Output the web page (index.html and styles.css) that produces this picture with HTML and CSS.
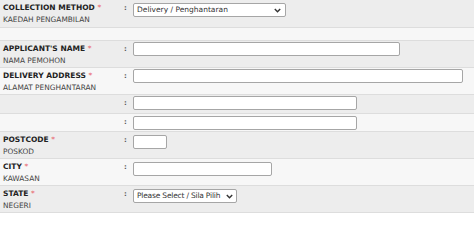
FILE: index.html
```html
<!DOCTYPE html>
<html>
<head>
<meta charset="utf-8">
<link rel="stylesheet" href="styles.css">
</head>
<body>
<div class="form">
  <div class="row dark h27">
    <div class="label"><b>COLLECTION METHOD <span class="req">*</span></b><span class="sub">KAEDAH PENGAMBILAN</span></div>
    <div class="colon">:</div>
    <div class="field f3"><div class="select w-method"><span>Delivery / Penghantaran</span><svg class="chev" width="7" height="5" viewBox="0 0 7 5"><path d="M0.8 1 L3.5 3.8 L6.2 1" fill="none" stroke="#333" stroke-width="1.4"/></svg></div></div>
  </div>
  <div class="row light h12"></div>
  <div class="row dark">
    <div class="label"><b>APPLICANT'S NAME <span class="req">*</span></b><span class="sub">NAMA PEMOHON</span></div>
    <div class="colon">:</div>
    <div class="field f1"><div class="input w-name"></div></div>
  </div>
  <div class="row light">
    <div class="label"><b>DELIVERY ADDRESS <span class="req">*</span></b><span class="sub">ALAMAT PENGHANTARAN</span></div>
    <div class="colon">:</div>
    <div class="field f1"><div class="input w-addr1"></div></div>
  </div>
  <div class="row dark h18">
    <div class="label"></div>
    <div class="colon">:</div>
    <div class="field f1"><div class="input w-addr"></div></div>
  </div>
  <div class="row light h17">
    <div class="label"></div>
    <div class="colon">:</div>
    <div class="field f2"><div class="input w-addr"></div></div>
  </div>
  <div class="row dark">
    <div class="label"><b>POSTCODE <span class="req">*</span></b><span class="sub">POSKOD</span></div>
    <div class="colon">:</div>
    <div class="field f3"><div class="input w-post"></div></div>
  </div>
  <div class="row light">
    <div class="label"><b>CITY <span class="req">*</span></b><span class="sub">KAWASAN</span></div>
    <div class="colon">:</div>
    <div class="field f3"><div class="input w-city"></div></div>
  </div>
  <div class="row dark">
    <div class="label"><b>STATE <span class="req">*</span></b><span class="sub">NEGERI</span></div>
    <div class="colon">:</div>
    <div class="field f3"><div class="select w-state"><span>Please Select / Sila Pilih</span><svg class="chev" width="7" height="5" viewBox="0 0 7 5"><path d="M0.8 1 L3.5 3.8 L6.2 1" fill="none" stroke="#333" stroke-width="1.4"/></svg></div></div>
  </div>
</div>
</body>
</html>
```
FILE: styles.css
```css
html, body {
  margin: 0;
  padding: 0;
  background: #ffffff;
}
body {
  font-family: "DejaVu Sans", Verdana, sans-serif;
  font-size: 7px;
  color: #222;
}
.form {
  width: 474px;
}
.row {
  display: grid;
  grid-template-columns: 124px 9px 1fr;
  height: 26px;
  border-bottom: 1px solid #dddddd;
}
.row.h27 { height: 27px; }
.row.h12 { height: 12px; }
.row.h18 { height: 18px; }
.row.h17 { height: 17px; }
.dark { background: #ededed; }
.light { background: #f7f7f7; }
.label {
  padding: 2px 0 0 3px;
  display: flex;
  flex-direction: column;
  line-height: 11.5px;
}
.label b {
  font-weight: bold;
  color: #222;
  font-size: 7.5px;
}
.req {
  color: #e8626a;
  font-weight: normal;
}
.sub {
  color: #444;
  font-size: 7.4px;
}
.colon {
  padding-top: 3px;
  font-weight: bold;
  color: #555;
  font-size: 7px;
  line-height: 11px;
}
.field { padding-top: 2px; }
.field.f1 { padding-top: 1px; }
.field.f2 { padding-top: 2px; }
.field.f3 { padding-top: 3px; }
.input {
  height: 12px;
  background: #fff;
  border: 1px solid #a6a6a6;
  border-radius: 2px;
  box-sizing: content-box;
}
.w-name { width: 265px; }
.w-addr1 { width: 328px; }
.w-addr { width: 222px; }
.w-post { width: 32px; }
.w-city { width: 137px; }
.select {
  height: 12px;
  background: #fff;
  border: 1px solid #a6a6a6;
  border-radius: 2px;
  display: flex;
  align-items: center;
  justify-content: space-between;
  padding: 0 4px 0 3px;
  font-size: 7.5px;
  color: #333;
  line-height: 12px;
  white-space: nowrap;
}
.w-method { width: 144px; }
.w-state { width: 96px; letter-spacing: -0.2px; padding-right: 3px; }
.chev { display: block; flex: none; }
```
